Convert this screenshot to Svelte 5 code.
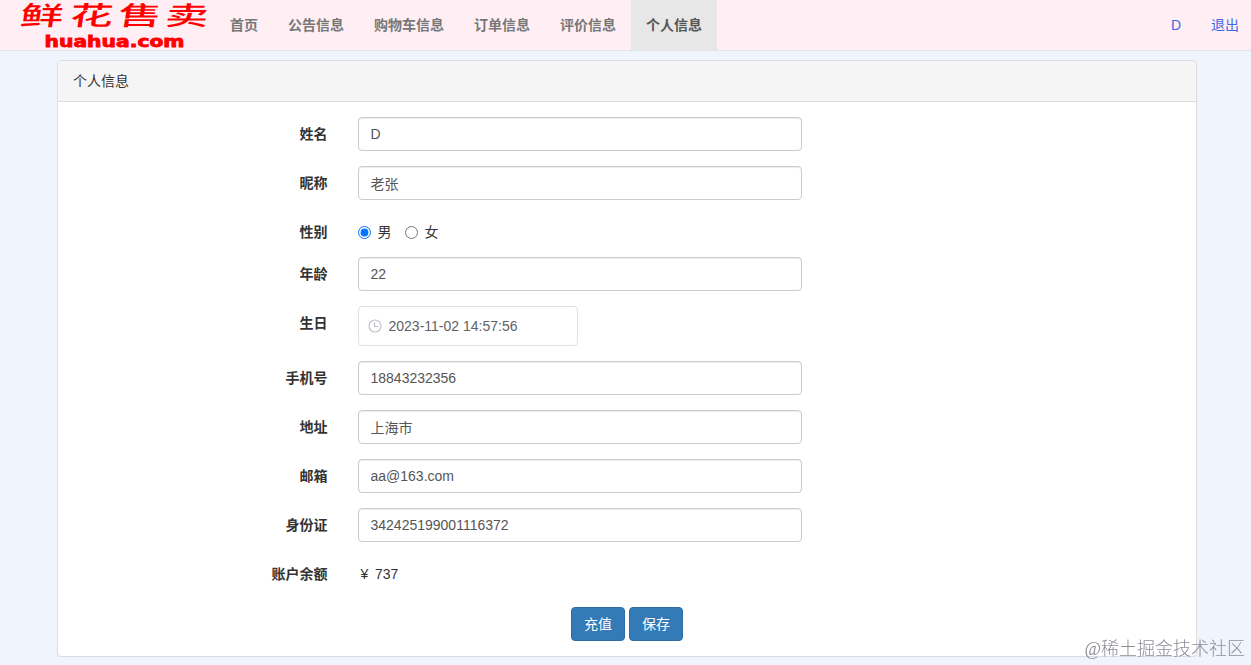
<script>
  const menu = ['首页', '公告信息', '购物车信息', '订单信息', '评价信息', '个人信息'];
  let active = $state('个人信息');

  let user = $state({
    name: 'D',
    nickname: '老张',
    sex: '男',
    age: '22',
    birthday: '2023-11-02 14:57:56',
    phone: '18843232356',
    address: '上海市',
    email: 'aa@163.com',
    idCard: '342425199001116372',
    account: 737
  });

  const fields = [
    { label: '姓名', key: 'name' },
    { label: '昵称', key: 'nickname' },
    { label: '性别', key: 'sex', type: 'radio' },
    { label: '年龄', key: 'age' },
    { label: '生日', key: 'birthday', type: 'date' },
    { label: '手机号', key: 'phone' },
    { label: '地址', key: 'address' },
    { label: '邮箱', key: 'email' },
    { label: '身份证', key: 'idCard' },
    { label: '账户余额', key: 'account', type: 'static' }
  ];
</script>

<nav class="navbar">
  <svg class="logo" width="215" height="50" viewBox="0 0 215 50" role="img" aria-label="鲜花售卖 huahua.com">
    <g class="logo-cn" transform="translate(0 24.5) scale(1.66 1) skewX(-5)">
      <text x="11.5" y="0">鲜</text>
      <text x="41.5" y="0">花</text>
      <text x="70.5" y="0">售</text>
      <text x="99" y="0">卖</text>
    </g>
    <text class="logo-en" x="44.5" y="46.5" textLength="140" lengthAdjust="spacingAndGlyphs">huahua.com</text>
  </svg>
  <ul class="menu">
    {#each menu as item}
      <li>
        <a href="#top" class:active={active === item} onclick={() => (active = item)}>{item}</a>
      </li>
    {/each}
  </ul>
  <div class="account">
    <a href="#top">{user.name}</a>
    <a href="#top">退出</a>
  </div>
</nav>

<main class="panel">
  <div class="panel-heading">个人信息</div>
  <form class="panel-body" onsubmit={(e) => e.preventDefault()}>
    {#each fields as field}
      <div class="form-group">
        <label class="control-label" for={field.key}>{field.label}</label>
        <div class="control">
          {#if field.type === 'radio'}
            <div class="radios" id={field.key}>
              {#each ['男', '女'] as sex}
                <label class="radio">
                  <input type="radio" name="sex" value={sex} bind:group={user.sex} />{sex}
                </label>
              {/each}
            </div>
          {:else if field.type === 'date'}
            <div class="date-editor">
              <svg width="14" height="14" viewBox="0 0 14 14" fill="none" stroke="currentColor" stroke-width="1.2">
                <circle cx="7" cy="7" r="6" />
                <path d="M6.5 3.2v4.3h4" />
              </svg>
              <input id={field.key} type="text" bind:value={user[field.key]} />
            </div>
          {:else if field.type === 'static'}
            <p class="static" id={field.key}><span class="yen">¥</span>{user.account}</p>
          {:else}
            <input class="form-control" id={field.key} type="text" bind:value={user[field.key]} />
          {/if}
        </div>
      </div>
    {/each}
    <div class="actions">
      <button type="button">充值</button>
      <button type="submit">保存</button>
    </div>
  </form>
</main>

<div class="watermark">@稀土掘金技术社区</div>

<style>
  :global(body) {
    background: #eff4fd;
    color: #333;
    font-family: "Liberation Sans", "Noto Sans CJK SC", sans-serif;
    font-size: 14px;
    line-height: 20px;
  }

  :global(*) {
    box-sizing: border-box;
  }

  .navbar {
    display: flex;
    height: 51px;
    background: #ffeff4;
    border-bottom: 1px solid #e0e3e9;
  }

  .logo {
    flex-shrink: 0;
    overflow: visible;
  }

  .logo text {
    fill: #f00;
  }

  .logo-cn {
    font-family: "Noto Sans CJK SC", sans-serif;
    font-size: 26px;
    font-weight: 500;
  }

  .logo-en {
    font-family: "DejaVu Sans", sans-serif;
    font-size: 15px;
    font-weight: 700;
    stroke: #f00;
    stroke-width: 0.8px;
  }

  .menu {
    display: flex;
    margin: 0;
    padding: 0;
    list-style: none;
  }

  .menu a {
    display: block;
    height: 50px;
    padding: 15px;
    color: #777;
    font-weight: 700;
    text-decoration: none;
  }

  .menu a.active {
    color: #555;
    background: #e7e7e7;
  }

  .account {
    display: flex;
    gap: 30px;
    margin-left: auto;
    padding: 15px 12px;
  }

  .account a {
    color: #4169e1;
    text-decoration: none;
  }

  .panel {
    width: 1140px;
    margin: 9px 0 0 57px;
    background: #fff;
    border: 1px solid #ddd;
    border-radius: 4px;
    box-shadow: 0 1px 1px rgba(0, 0, 0, 0.05);
  }

  .panel-heading {
    padding: 10px 15px;
    background: #f5f5f5;
    border-bottom: 1px solid #ddd;
    border-radius: 3px 3px 0 0;
  }

  .panel-body {
    padding: 15px 0;
  }

  .form-group {
    display: flex;
    margin-bottom: 15px;
  }

  .control-label {
    width: 25%;
    padding: 7px 15px 0;
    font-weight: 700;
    text-align: right;
  }

  .control {
    width: 41.6667%;
    padding: 0 15px;
  }

  .form-control {
    display: block;
    width: 100%;
    height: 34px;
    padding: 6px 12px;
    color: #555;
    font: inherit;
    background: #fff;
    border: 1px solid #ccc;
    border-radius: 4px;
    box-shadow: inset 0 1px 1px rgba(0, 0, 0, 0.075);
    outline: none;
  }

  .radios {
    display: flex;
    gap: 13px;
    padding-top: 7px;
  }

  .radio {
    display: flex;
    height: 20px;
    gap: 7px;
  }

  .radio input {
    width: 13px;
    height: 13px;
    margin: 4px 0 0;
  }

  .date-editor {
    display: flex;
    align-items: center;
    width: 220px;
    height: 40px;
    padding-left: 9px;
    gap: 7px;
    color: #c0c4cc;
    border: 1px solid #dcdfe6;
    border-radius: 4px;
  }

  .date-editor input {
    width: 180px;
    padding: 0;
    color: #606266;
    font: inherit;
    background: none;
    border: none;
    outline: none;
  }

  .static {
    height: 35px;
    margin: 0;
    padding-top: 7px;
  }

  .yen {
    display: inline-block;
    width: 17.5px;
    padding-left: 3px;
  }

  .actions {
    display: flex;
    justify-content: center;
    gap: 4px;
  }

  .actions button {
    width: 54px;
    height: 34px;
    padding: 0;
    color: #fff;
    font: inherit;
    background: #337ab7;
    border: 1px solid #2e6da4;
    border-radius: 4px;
    cursor: pointer;
  }

  .watermark {
    position: fixed;
    right: 6px;
    bottom: 4px;
    color: #8b8e94;
    font-family: "Liberation Serif", "Noto Sans CJK SC", serif;
    font-size: 18px;
    font-weight: 300;
    line-height: 24px;
    white-space: nowrap;
  }
</style>
